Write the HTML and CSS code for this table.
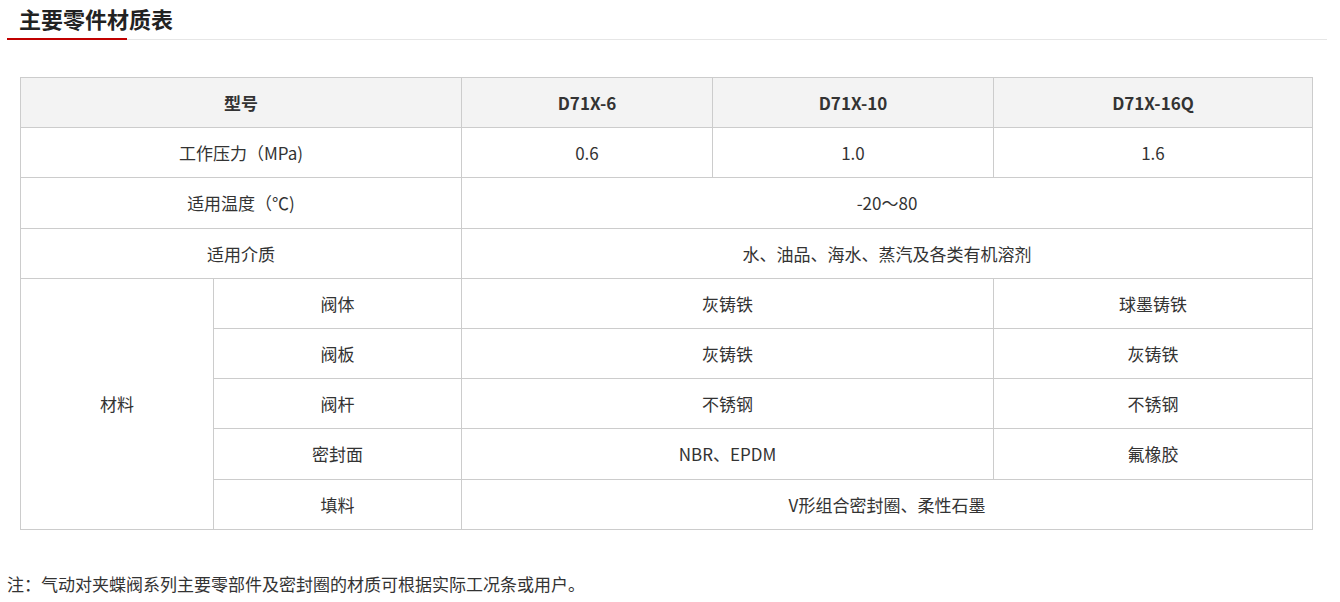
FILE: index.html
```html
<!DOCTYPE html>
<html lang="zh-CN">
<head>
<meta charset="utf-8">
<title>主要零件材质表</title>
<link rel="stylesheet" href="styles.css">
</head>
<body>
<div class="page">
  <div class="section-head">
    <h2 class="section-title">主要零件材质表</h2>
    <div class="rule"><span class="rule-accent"></span><span class="rule-rest"></span></div>
  </div>
  <table class="spec">
    <colgroup>
      <col class="c1"><col class="c2"><col class="c3"><col class="c4"><col class="c5">
    </colgroup>
    <thead>
      <tr><th colspan="2">型号</th><th>D71X-6</th><th>D71X-10</th><th>D71X-16Q</th></tr>
    </thead>
    <tbody>
      <tr><td colspan="2">工作压力（MPa)</td><td>0.6</td><td>1.0</td><td>1.6</td></tr>
      <tr class="tall"><td colspan="2">适用温度（℃)</td><td colspan="3">-20～80</td></tr>
      <tr><td colspan="2">适用介质</td><td colspan="3">水、油品、海水、蒸汽及各类有机溶剂</td></tr>
      <tr><td rowspan="5">材料</td><td>阀体</td><td colspan="2">灰铸铁</td><td>球墨铸铁</td></tr>
      <tr><td>阀板</td><td colspan="2">灰铸铁</td><td>灰铸铁</td></tr>
      <tr><td>阀杆</td><td colspan="2">不锈钢</td><td>不锈钢</td></tr>
      <tr class="tall"><td>密封面</td><td colspan="2">NBR、EPDM</td><td>氟橡胶</td></tr>
      <tr><td>填料</td><td colspan="3">V形组合密封圈、柔性石墨</td></tr>
    </tbody>
  </table>
  <p class="note">注：气动对夹蝶阀系列主要零部件及密封圈的材质可根据实际工况条或用户。</p>
</div>
</body>
</html>
```
FILE: styles.css
```css
html, body {
  margin: 0;
  padding: 0;
  background: #fff;
}
body {
  font-family: "Microsoft YaHei", "Noto Sans CJK SC", "Noto Sans", sans-serif;
  color: #333;
}
.page {
  width: 1320px;
  padding: 0 0 0 7px;
}
.section-head {
  display: flex;
  flex-direction: column;
}
.section-title {
  margin: 0;
  padding: 3px 0 0 12px;
  height: 38px;
  box-sizing: border-box;
  font-size: 22px;
  line-height: 30px;
  font-weight: bold;
  color: #222;
}
.rule {
  display: flex;
  align-items: flex-start;
  height: 2px;
}
.rule-accent {
  width: 120px;
  height: 2px;
  background: #c00000;
}
.rule-rest {
  flex: 1;
  margin-top: 1px;
  height: 1px;
  background: #e6e6e6;
}
.spec {
  margin: 37px 0 0 13px;
  border-collapse: collapse;
  table-layout: fixed;
  width: 1292px;
  font-size: 17px;
}
.c1 { width: 193px; }
.c2 { width: 248px; }
.c3 { width: 251px; }
.c4 { width: 281px; }
.c5 { width: 319px; }
.spec th, .spec td {
  border: 1px solid #cccccc;
  height: 49px;
  padding: 0;
  text-align: center;
  vertical-align: middle;
  line-height: 20px;
}
.spec tr.tall td {
  height: 50px;
}
.spec th {
  background: #f3f3f3;
  font-weight: bold;
  color: #333;
}
.note {
  margin: 42px 0 0 0;
  font-size: 17px;
  line-height: 24px;
  color: #333;
}
```
